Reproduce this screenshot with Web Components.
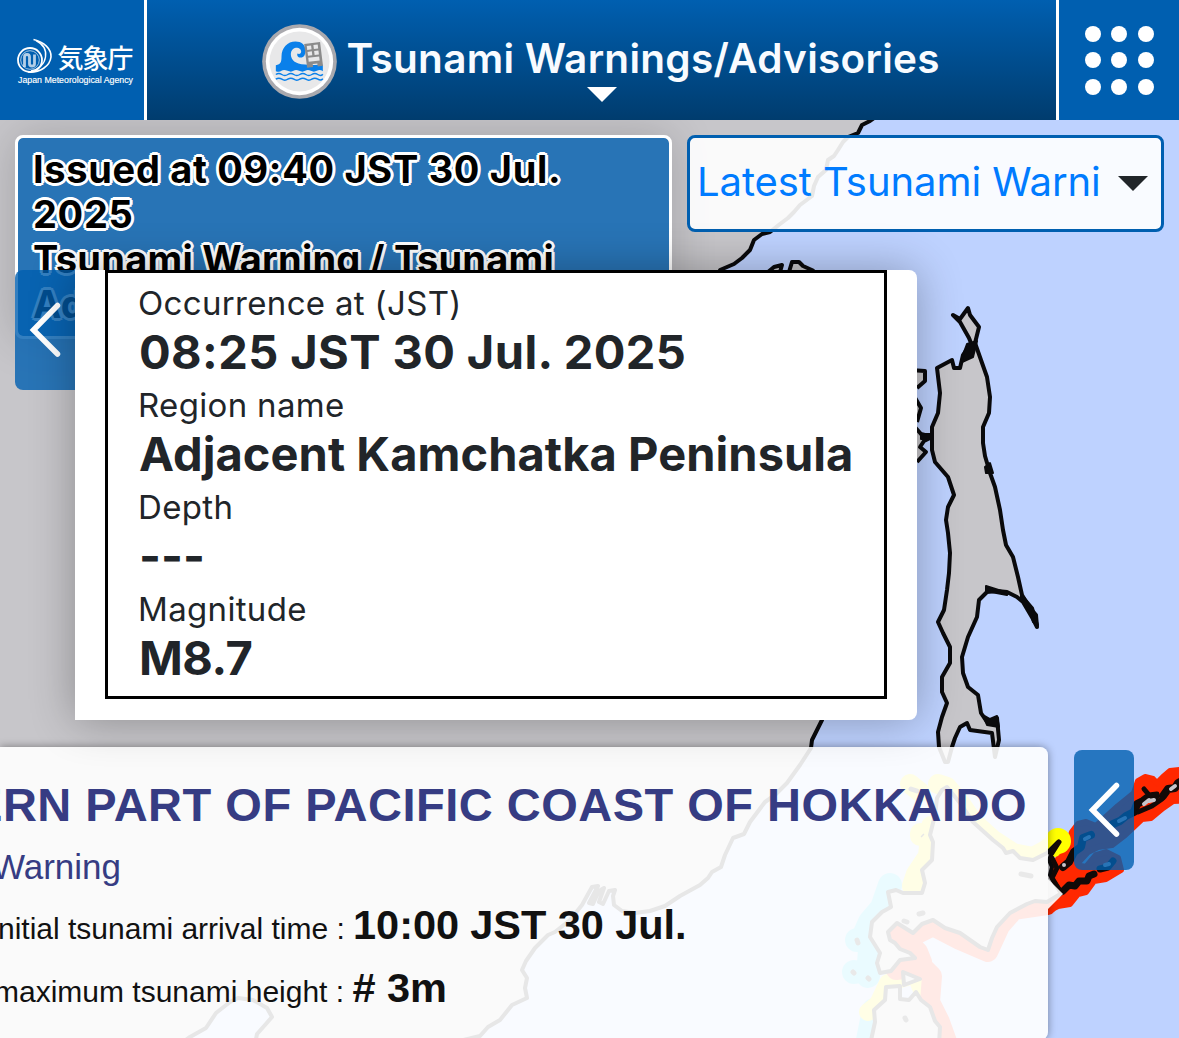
<!DOCTYPE html>
<html lang="en">
<head>
<meta charset="utf-8">
<title>Tsunami Warnings/Advisories</title>
<style>
  body {
    margin: 0;
    width: 1179px;
    height: 1038px;
    overflow: hidden;
    font-family: Inter, "Noto Sans", sans-serif;
    color: #212529;
  }
</style>
</head>
<body>
<tsunami-page></tsunami-page>

<script>
class JmaLogo extends HTMLElement {
    constructor() {
        super();
        this.attachShadow({ mode: 'open' });
        this.shadowRoot.innerHTML = `
        <style>
        :host { display: block; width: 144px; height: 120px; background: #005fb0; }
        svg { display: block; }
        </style>
        <svg width="144" height="120" viewBox="0 0 144 120" fill="none" stroke="#fff">
          <circle cx="30" cy="60" r="12" stroke-width="1.8"/>
          <circle cx="30" cy="60" r="9.300" stroke-width=".8" opacity=".8"/>
          <path d="M24.500 67V57q0-2.500 2.500-2.500t2.500 2.500v7q0 2 2.500 2T34.500 64v-9.500" stroke-width="2.800" opacity=".7"/>
          <path d="M33.500 39.500C44 42 51.500 49 51 57 50 66 40 73 28 72" stroke-width="1.600"/>
          <path d="M36 40.500C43 44 46.500 50 45.500 57 44.500 64 39 69.500 31 71" stroke-width="1.400"/>
          <g fill="#fff" stroke="none">
            <text x="57.500" y="67.500" font-family="'Noto Sans CJK JP', sans-serif" font-weight="500" font-size="26" textLength="76">気象庁</text>
            <text x="18" y="82.500" font-family="'Liberation Sans', sans-serif" font-size="8.800" textLength="115" stroke="#fff" stroke-width=".15">Japan Meteorological Agency</text>
          </g>
        </svg>
        `;
    }
}

class TsunamiIcon extends HTMLElement {
    constructor() {
        super();
        this.attachShadow({ mode: 'open' });
        this.shadowRoot.innerHTML = `
        <style>
        :host { display: block; width: 75px; height: 75px; }
        svg { display: block; }
        </style>
        <svg width="75" height="75" viewBox="21.500 17.500 225 225">
          <circle cx="134" cy="130" r="112" fill="#a9a9ae"/>
          <circle cx="134" cy="130" r="101" fill="#fff"/>
          <circle cx="134" cy="130" r="90" fill="#e8e8e9"/>
          <path fill="#0a80ea" d="M63 159V141C78 139 80 131 80 116 80 88 98 70 122 70 140 70 151 80 152 96 152 110 147 118 138 118 130 119 125 112 128 106 134 109 139 106 139 99 138 91 130 87 123 89 108 92 105 108 111 121 119 137 140 142 204 140V159Q195 153 186 158T168 158 151 158 133 158 116 158 98 158 80 158 63 159Z"/>
          <g transform="rotate(-7 176 108)">
            <path fill="#8b8b8b" d="M152 74h48v72h-16v-9h-14v9h-18z"/>
            <path fill="#e8e8e9" d="M159 81h13v12h-13zM179 81h13v12h-13zM159 99h13v12h-13zM179 99h13v12h-13zM159 117h33v12h-33z"/>
          </g>
          <g fill="none" stroke="#0a80ea" stroke-width="4.500">
            <path d="M63 169q9-6 18 0t18 0 18 0 18 0 18 0 18 0 18 0 15-1"/>
            <path d="M63 183q9-6 18 0t18 0 18 0 18 0 18 0 18 0 18 0 15-1"/>
          </g>
        </svg>
        `;
    }
}

class SiteHeader extends HTMLElement {
    constructor() {
        super();
        this.attachShadow({ mode: 'open' });
        this.shadowRoot.innerHTML = `
        <style>
        :host { display: flex; height: 120px; gap: 3px; background: #fff; }
        .title {
          flex: 1;
          display: flex;
          flex-direction: column;
          align-items: center;
          padding-top: 24px;
          box-sizing: border-box;
          background: linear-gradient(#005fb0, #003c6e);
        }
        .row { display: flex; gap: 10px; height: 75px; width: 680px; }
        h1 {
          margin: 0;
          font-size: 40.500px;
          line-height: 69px;
          font-weight: 600;
          letter-spacing: 0.270px;
          white-space: nowrap;
          color: #f8fbff;
        }
        .caret { margin-top: -12px; }
        .menu {
          width: 120px;
          display: grid;
          grid-template-columns: repeat(3, 16px);
          grid-auto-rows: 16px;
          gap: 10.500px;
          place-content: center;
          background: #005fb0;
        }
        .menu i { border-radius: 50%; background: #fff; }
        </style>
        <jma-logo></jma-logo>
        <div class="title">
          <div class="row"><tsunami-icon></tsunami-icon><h1><slot></slot></h1></div>
          <svg class="caret" width="30" height="15"><path d="M0 0h30L15 15z" fill="#fff"/></svg>
        </div>
        <div class="menu">${'<i></i>'.repeat(9)}</div>
        `;
    }
}

class CoastMap extends HTMLElement {
    constructor() {
        super();
        this.attachShadow({ mode: 'open' });
        this.shadowRoot.innerHTML = `
        <style>
        :host { display: block; height: 918px; background: #bed2ff; }
        svg { display: block; }
        .land { fill: #c7c6ca; stroke: #0a0a0c; stroke-width: 4; stroke-linejoin: round; }
        .zone { fill: none; stroke-linejoin: round; stroke-linecap: round; stroke-width: 24; }
        .red { stroke: #ff2800; }
        .yellow { stroke: #faf500; }
        .cyan { stroke: #30d8ff; }
        </style>
        <svg width="1179" height="918" viewBox="0 120 1179 918">
          <!-- continent -->
          <path class="land" d="M-10 110H885L870 121 862 125 858 133 848 137 843 142 838 150 834 156 828 160 826 170 818 177 814 186 812 196 800 205 794 212 788 218 780 224 770 232 762 234 754 240 750 250 742 258 734 264 720 270
            720 400 830 600 822 720 812 740 811 748 800 765 787 783 775 795 765 802 750 822 744 834 733 838 725 855 721 867 712 872 708 878 700 885 680 896 665 906 650 911 635 913 622 911 614 905 613 896 615 890 609 891 603 904 599 902 604 888 599 891 593 904 589 903 598 886 592 887 582 905 570 920 555 932 548 935 535 948 526 961 522 970 527 978 525 988 527 998 512 1005 500 1020 488 1027 480 1036 455 1042-10 1048Z"/>
          <path class="land" style="fill:#bed2ff" d="M180 1044 190 1037 206 1028 216 1013 230 1002 238 998 253 1000 267 1008 272 1017 265 1025 257 1034 255 1044"/>
          <path class="land" d="M768 272 774 267 782 265 780 272M789 272 792 262 799 262 803 266 814 271"/>
          <path class="land" d="M910 370 925 371 925 381 917 388M914 396 921 408 917 422M914 426 921 434 932 437 924 441 920 447 926 452 917 462"/>
          <!-- Sakhalin -->
          <path class="land" d="M953 315 960 319 968 308 970 315 979 327 975 343 981 360 987 377 990 397 989 413 983 427 983 443 985 456 990 473 995 487 1000 510 1003 530 1006 545 1013 557 1018 577 1022 595 1030 608 1036 615 1037 627 1033 619 1023 602 1017 597 1007 592 997 591 987 592 979 600 977 617 968 637 962 657 963 673 968 687 978 695 981 713 987 722 997 718 999 740 995 757 992 733 970 730 967 723 960 727 955 738 952 747 948 762 945 762 939 747 938 732 942 717 947 703 942 692 942 677 950 663 950 647 943 633 938 622 944 610 947 590 949 573 950 553 948 533 946 520 948 507 954 495 948 477 935 462 932 450 932 427 938 413 940 393 937 368 952 360 954 368 960 368 963 355 971 343 969 338 960 322Z"/>
          <path d="M967 344 977 341 973 357 962 362 964 352ZM985 467l5-4 3 10-7 0ZM986 586l22 7-1 2-21-4ZM1021 594l12 14 5 17-5-3-3-12-9-10ZM983 715l7 4 7-3 2 11-12-2ZM921 434h9v5h-9Z" fill="#0a0a0c" stroke="#0a0a0c" stroke-width="2" stroke-linejoin="round"/>
          <!-- advisory zones along the coast of Hokkaido and Aomori -->
          <g>
            <path class="zone yellow" style="stroke-width:20" d="M910 784 920 792M938 784 947 787 960 803 973 822 993 840 1013 853 1033 857 1046 850 1059 840M920 833V836M931 826 928 856 916 874 912 886" />
            <path class="zone cyan" style="stroke-width:24" d="M890 885 882 908 870 922 862 940 857 940M870 950 868 976M854 972V972M874 1010 868 1040"/>
            <path class="zone yellow" style="stroke-width:18" d="M910 976 888 983 878 1004 868 1012M918 980 925 998"/>
            <path class="zone red" style="stroke-width:20" d="M897 930 918 952 922 962M905 940 933 926 960 940 988 952 1000 926 1014 910 1047 905M896 970 922 966 932 976 930 1002 940 1022 950 1050"/>
          </g>
          <path fill="#ff2800" stroke="#ff2800" stroke-width="6" stroke-linejoin="round" d="M1056 862 1068 845 1072 832 1078 824 1086 822 1096 826 1118 806 1134 793 1138 781 1145 777 1153 779 1157 783 1163 777 1170 771 1190 769V800L1173 801 1163 808 1151 818 1142 819 1125 835 1112 845 1098 847 1088 852 1076 865 1086 867 1096 855 1106 852 1118 858 1121 870 1106 879 1094 881 1086 892 1078 894 1070 904 1058 906 1046 912 1030 910V880Z"/>
          <circle cx="1058" cy="841" r="13" fill="#ff0"/>
          <path d="M1046 860 1058 856 1071 842 1069 836 1060 840 1046 852Z" fill="#ff0"/>
          <!-- Hokkaido -->
          <path class="land" d="M922 835l1 1M947 787 960 803 973 822 993 840 1003 848 1006 853 1013 851 1020 858 1033 860 1047 853 1058 842 1053 850 1049 860 1052 867 1050 875 1055 883 1062 893 1047 902 1035 901 1027 904 1010 913 997 927 992 938 988 950 980 947 960 933 945 928 933 920 922 924 913 933 905 928 897 923 888 932 890 940 895 943 900 949 910 953 915 958 900 960 891 971 880 973 877 963 880 953 870 937 872 922 882 912 891 907 888 892 896 890 903 893 922 893 925 883 922 870 932 860 933 842 930 835 935 815 937 798 942 790Z"/>
          <path class="land" d="M870 1045 875 1022 874 1010 885 1000 886 987 900 986 900 999 909 1000 916 992 921 1000 930 1007 935 1021 940 1027 939 1045M903 972 904 985 920 979Z"/>
          <path d="M904 921l3 1M919 914l4-1M1021 874l10 2M905 1018l1 2M857 940l1 3M853 972l1 1M868 978l1 1M911 789l6 2" stroke="#222" stroke-width="5" stroke-linecap="round"/>
          <!-- Kurils -->
          <g fill="none" stroke="#120a08" stroke-linejoin="round" stroke-linecap="round">
            <path stroke-width="8" d="M1063 867 1069 862 1074 852 1081 847 1083 838 1091 835M1113 824 1120 821 1126 816 1134 812 1137 804 1143 801 1147 798 1155 797M1163 796 1168 789 1175 788 1178 783 1184 780"/>
            <path stroke-width="7" d="M1063 891 1069 885 1075 886 1079 881 1087 881 1089 876 1094 874M1100 869 1108 867 1113 861"/>
            <path stroke-width="5" d="M1052 853 1059 842M1052 858 1057 868 1052 878 1060 891M1144 789 1149 795 1157 794M1138 812 1152 806 1162 799"/>
          </g>
          <path d="M1064 865v0M1085 839l4-2M1119 821l6-3M1144 804l5-4M1149 801l5-1M1171 789l4-3M1105 865l4-1" stroke="#c7c5cb" stroke-width="4" stroke-linecap="round"/>
        </svg>
        `;
    }
}

class IssueBox extends HTMLElement {
    constructor() {
        super();
        this.attachShadow({ mode: 'open' });
        this.shadowRoot.innerHTML = `
        <style>
        :host {
          display: block;
          box-sizing: border-box;
          height: 204px;
          padding: 9px 15px;
          border: 3px solid #fff;
          border-radius: 8px;
          background: rgba(0, 95, 176, 0.800);
          background-clip: padding-box;
          box-shadow: 0 0 45px rgba(0, 0, 0, 0.180);
          font-size: 38px;
          line-height: 45px;
          font-weight: 700;
          color: #000;
          text-shadow: 2px 2px #fff, -2px 2px #fff, 2px -2px #fff, -2px -2px #fff,
            3px 0 #fff, -3px 0 #fff, 0 3px #fff, 0 -3px #fff;
        }
        ::slotted(div) { letter-spacing: 0.250px; }
        ::slotted(.time) { letter-spacing: 0.670px; }
        </style>
        <slot></slot>
        `;
    }
}

class ReportSelect extends HTMLElement {
    constructor() {
        super();
        this.attachShadow({ mode: 'open' });
        this.shadowRoot.innerHTML = `
        <style>
        :host {
          display: flex;
          justify-content: space-between;
          align-items: center;
          box-sizing: border-box;
          height: 97px;
          padding: 0 13px 0 7px;
          border: 3px solid #005fb0;
          border-radius: 8px;
          background: rgba(255, 255, 255, 0.900);
          font-size: 40px;
          line-height: 48px;
          letter-spacing: -0.070px;
          white-space: nowrap;
          color: #007bff;
        }
        span { padding-bottom: 4px; }
        </style>
        <span><slot></slot></span>
        <svg width="30" height="15"><path d="M0 0h30L15 15z" fill="#212529"/></svg>
        `;
    }
}

class SlideButton extends HTMLElement {
    constructor() {
        super();
        this.attachShadow({ mode: 'open' });
        this.shadowRoot.innerHTML = `
        <style>
        :host {
          display: grid;
          place-items: center;
          width: 60px;
          height: 120px;
          border-radius: var(--corners, 8px);
          background: rgba(0, 95, 176, 0.800);
        }
        </style>
        <svg width="60" height="120" viewBox="0 0 60 120" fill="none" stroke="#fff" stroke-width="5.500" stroke-linecap="round" stroke-linejoin="miter">
          <path d="M42.500 35.500 18.500 60l24 24"/>
        </svg>
        `;
    }
}

class QuakePopup extends HTMLElement {
    constructor() {
        super();
        this.attachShadow({ mode: 'open' });
    }

    set quake(items) {
        this.render(items);
    }

    render(items) {
        this.shadowRoot.innerHTML = `
        <style>
        :host {
          display: block;
          box-sizing: border-box;
          width: 842px;
          height: 450px;
          padding: 0 30px 21px;
          border-radius: 0 8px 8px 0;
          background: #fff;
          box-shadow: 0 0 45px rgba(0, 0, 0, 0.300);
        }
        dl {
          box-sizing: border-box;
          height: 429px;
          margin: 0;
          padding: 9px 31px;
          border: 3px solid #000;
          white-space: nowrap;
        }
        dt { margin-left: -1px; font-size: 33px; line-height: 42px; letter-spacing: 0.330px; }
        dd { margin: 0 0 4px; font-size: 47px; line-height: 56px; font-weight: 700; letter-spacing: 0.050px; }
        dd:first-of-type { letter-spacing: 0.400px; }
        dd:last-of-type { letter-spacing: -0.500px; }
        </style>
        <dl>${items.map(([label, value]) => `<dt>${label}</dt><dd>${value}</dd>`).join('')}</dl>
        `;
    }
}

class AreaPanel extends HTMLElement {
    constructor() {
        super();
        this.attachShadow({ mode: 'open' });
        this.shadowRoot.innerHTML = `
        <style>
        :host {
          display: flex;
          flex-direction: column;
          box-sizing: border-box;
          width: 1048px;
          height: 293px;
          padding-top: 31px;
          border-radius: 0 8px 8px 0;
          background: rgba(255, 255, 255, 0.900);
          box-shadow: 0 0 9px rgba(0, 0, 0, 0.400);
          font-family: "Liberation Sans", Arial, sans-serif;
          white-space: nowrap;
          color: #111;
        }
        h2 {
          align-self: flex-end;
          margin: 0 21px 0 0;
          font-size: 47px;
          line-height: 54px;
          letter-spacing: 0.500px;
          color: #363c83;
        }
        .kind { margin: 13px 0 0 -8px; font-size: 35px; line-height: 44px; color: #363c83; }
        .row { height: 63px; margin-left: -2px; font-size: 30px; line-height: 63px; }
        .first { margin-top: 8px; }
        .height { margin-left: -6px; }
        b { font-size: 41.500px; line-height: 0; letter-spacing: -0.070px; }
        </style>
        <h2><slot name="area"></slot></h2>
        <div class="kind"><slot name="kind"></slot></div>
        <div class="row first">nitial tsunami arrival time : <b><slot name="time"></slot></b></div>
        <div class="row height">maximum tsunami height : <b><slot name="height"></slot></b></div>
        `;
    }
}

class TsunamiPage extends HTMLElement {
    constructor() {
        super();
        this.attachShadow({ mode: 'open' });
        this.shadowRoot.innerHTML = `
        <style>
        :host { display: block; height: 1038px; overflow: hidden; }
        main { position: relative; height: 918px; overflow: hidden; }
        .bar {
          position: absolute;
          inset: 15px 15px auto;
          display: grid;
          grid-template-columns: 657px 477px;
          gap: 15px;
          align-items: start;
        }
        .panel { position: absolute; left: 0; top: 627px; }
        .tip {
          position: absolute;
          left: 1048px;
          top: 759px;
          width: 15px;
          height: 30px;
          background: rgba(255, 255, 255, 0.900);
          clip-path: polygon(0 0, 100% 50%, 0 100%);
        }
        .quake { position: absolute; left: 15px; top: 150px; display: flex; }
        .quake slide-button { --corners: 8px 0 0 8px; }
        .legend { position: absolute; left: 1074px; top: 630px; }
        </style>
        <site-header>Tsunami Warnings/Advisories</site-header>
        <main>
          <coast-map></coast-map>
          <div class="bar">
            <issue-box>
              <div class="time">Issued at 09:40 JST 30 Jul.<br>2025</div>
              <div>Tsunami Warning / Tsunami<br>Ad</div>
            </issue-box>
            <report-select>Latest Tsunami Warni</report-select>
          </div>
          <area-panel class="panel">
            <span slot="area">ERN PART OF PACIFIC COAST OF HOKKAIDO</span>
            <span slot="kind">Warning</span>
            <span slot="time">10:00 JST 30 Jul.</span>
            <span slot="height"># 3m</span>
          </area-panel>
          <div class="tip"></div>
          <slide-button class="legend"></slide-button>
          <div class="quake"><slide-button></slide-button><quake-popup></quake-popup></div>
        </main>
        `;
    }

    connectedCallback() {
        this.shadowRoot.querySelector('quake-popup').quake = [
            ['Occurrence at (JST)', '08:25 JST 30 Jul. 2025'],
            ['Region name', 'Adjacent Kamchatka Peninsula'],
            ['Depth', '---'],
            ['Magnitude', 'M8.7'],
        ];
    }
}

customElements.define('jma-logo', JmaLogo);
customElements.define('tsunami-icon', TsunamiIcon);
customElements.define('site-header', SiteHeader);
customElements.define('coast-map', CoastMap);
customElements.define('issue-box', IssueBox);
customElements.define('report-select', ReportSelect);
customElements.define('slide-button', SlideButton);
customElements.define('quake-popup', QuakePopup);
customElements.define('area-panel', AreaPanel);
customElements.define('tsunami-page', TsunamiPage);
</script>
</body>
</html>
